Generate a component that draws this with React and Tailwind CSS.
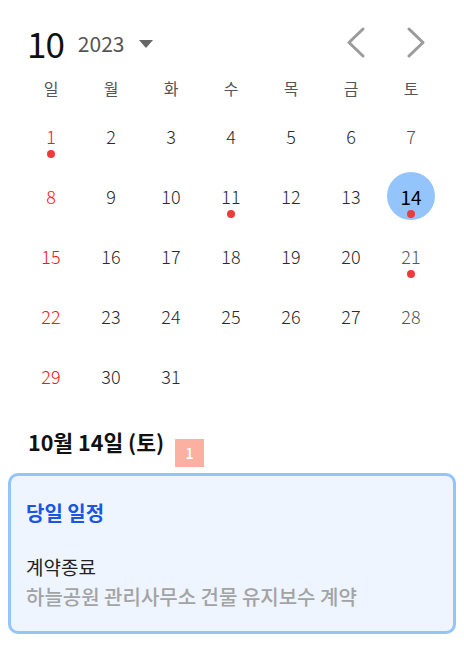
const WEEKDAYS = ['일', '월', '화', '수', '목', '금', '토']
const EVENTS = [1, 11, 14, 21]
const SELECTED = 14

function buildWeeks() {
  // Oct 2023 starts on Sunday
  const days = []
  for (let d = 1; d <= 31; d++) days.push(d)
  const weeks = []
  for (let i = 0; i < days.length; i += 7) {
    const w = days.slice(i, i + 7)
    while (w.length < 7) w.push(null)
    weeks.push(w)
  }
  return weeks
}

function Chevron({ dir }) {
  return (
    <svg width="20" height="31" viewBox="0 0 20 31" fill="none">
      <path
        d={dir === 'left' ? 'M17 2 L3 15.5 L17 29' : 'M3 2 L17 15.5 L3 29'}
        stroke="#9b9b9b"
        strokeWidth="3"
        strokeLinecap="round"
        strokeLinejoin="round"
      />
    </svg>
  )
}

function DayCell({ day, col }) {
  if (!day) return <div className="h-[60px]" />
  const selected = day === SELECTED
  const hasEvent = EVENTS.includes(day)
  const color = selected
    ? 'text-black font-normal text-[19px]'
    : col === 0
      ? 'text-[#ff1414] font-light text-[18px]'
      : col === 6
        ? 'text-[#555] font-light text-[18px]'
        : 'text-[#2a2a2a] font-light text-[18px]'
  return (
    <div className="h-[60px] flex items-center justify-center">
      <div
        className={`relative w-[48px] h-[48px] rounded-full flex items-center justify-center ${
          selected ? 'bg-[#94c4fc]' : ''
        }`}
      >
        <span className={`leading-none ${color}`}>{day}</span>
        {hasEvent && (
          <span className="absolute left-1/2 top-[38px] -translate-x-1/2 w-[8px] h-[8px] rounded-full bg-[#ee3b3b]" />
        )}
      </div>
    </div>
  )
}

export default function App() {
  const weeks = buildWeeks()
  return (
    <div
      className="w-[464px] h-[646px] bg-white overflow-hidden"
      style={{ fontFamily: '"Noto Sans CJK KR", "Noto Sans", sans-serif' }}
    >
      <div className="pl-[21px] w-[441px]">
        <div className="h-[40px] mt-[22px] flex items-center">
          <span className="ml-[6px] text-[35px] leading-none text-[#111] tracking-[-1px]">10</span>
          <span className="ml-[14px] mt-[2px] text-[21px] leading-none text-[#555]">2023</span>
          <svg className="ml-[15px] mt-[3px]" width="14" height="8" viewBox="0 0 14 8">
            <path d="M0 0 L14 0 L7 8 Z" fill="#666" />
          </svg>
          <div className="ml-auto flex items-center">
            <Chevron dir="left" />
            <div className="w-[40px]" />
            <Chevron dir="right" />
            <div className="w-[15px]" />
          </div>
        </div>

        <div className="grid grid-cols-7 w-[420px] h-[30px] mt-[11px] items-center">
          {WEEKDAYS.map((w) => (
            <div key={w} className="text-center text-[16px] text-[#555] leading-none">
              {w}
            </div>
          ))}
        </div>

        <div className="mt-[3px] w-[420px]">
          {weeks.map((week, i) => (
            <div key={i} className="grid grid-cols-7">
              {week.map((d, j) => (
                <DayCell key={j} day={d} col={j} />
              ))}
            </div>
          ))}
        </div>
      </div>

      <div className="px-[28px] mt-[22px] flex items-start">
        <h2 className="text-[21.5px] font-bold text-[#111] leading-[28px]">10월 14일 (토)</h2>
        <span className="ml-[11px] mt-[11px] w-[29px] h-[28px] bg-[#fcb0a2] text-white text-[15px] font-medium flex items-center justify-center">
          1
        </span>
      </div>

      <div className="mx-[8px] mt-[6px] h-[161px] rounded-[10px] border-[3px] border-[#94c4fc] bg-[#eef5ff] px-[15px]">
        <div className="mt-[23px] text-[20px] font-bold text-[#1a56e6] leading-[28px]">당일 일정</div>
        <div className="mt-[26px] text-[19px] text-[#222] leading-[28px]">계약종료</div>
        <div className="mt-[2px] text-[20px] font-medium text-[#a3a3a3] leading-[28px]">
          하늘공원 관리사무소 건물 유지보수 계약
        </div>
      </div>
    </div>
  )
}
